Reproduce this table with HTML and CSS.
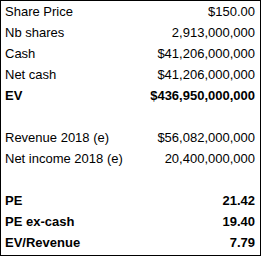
FILE: index.html
```html
<!DOCTYPE html>
<html>
<head>
<meta charset="utf-8">
<link rel="stylesheet" href="styles.css">
</head>
<body>
<div class="sheet">
  <div class="row"><span>Share Price</span><span>$150.00</span></div>
  <div class="row"><span>Nb shares</span><span>2,913,000,000</span></div>
  <div class="row"><span>Cash</span><span>$41,206,000,000</span></div>
  <div class="row"><span>Net cash</span><span>$41,206,000,000</span></div>
  <div class="row bold"><span>EV</span><span>$436,950,000,000</span></div>
  <div class="row"></div>
  <div class="row"><span>Revenue 2018 (e)</span><span>$56,082,000,000</span></div>
  <div class="row"><span>Net income 2018 (e)</span><span>20,400,000,000</span></div>
  <div class="row"></div>
  <div class="row bold"><span>PE</span><span>21.42</span></div>
  <div class="row bold"><span>PE ex-cash</span><span>19.40</span></div>
  <div class="row bold"><span>EV/Revenue</span><span>7.79</span></div>
</div>
</body>
</html>
```
FILE: styles.css
```css
html, body {
  margin: 0;
  padding: 0;
  background: #ffffff;
}
.sheet {
  width: 259px;
  height: 254px;
  border: 1px solid #000000;
  font-family: "Liberation Sans", Arial, sans-serif;
  font-size: 13px;
  color: #000000;
  display: flex;
  flex-direction: column;
}
.row {
  height: 21px;
  display: flex;
  justify-content: space-between;
  align-items: center;
  padding: 0 5px 0 4px;
}
.bold {
  font-weight: bold;
}
```
